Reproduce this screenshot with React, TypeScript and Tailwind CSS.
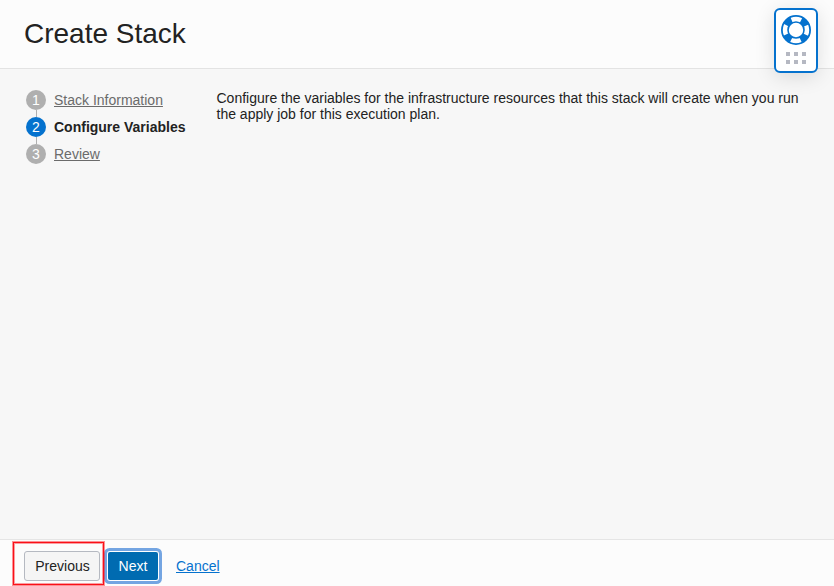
const steps = [
  { n: 1, label: 'Stack Information', active: false },
  { n: 2, label: 'Configure Variables', active: true },
  { n: 3, label: 'Review', active: false },
];

function LifeRing() {
  return (
    <svg width="32" height="32" viewBox="-16 -16 32 32" fill="none" stroke="#0572ce">
      <circle r="11.2" strokeWidth="6.4" strokeDasharray="7.6 9.993" strokeDashoffset="-4.997" />
      <circle r="14.1" strokeWidth="1.8" />
      <circle r="8" strokeWidth="1.6" />
    </svg>
  );
}

function HelpWidget() {
  return (
    <button className="absolute left-[774px] top-2 flex h-[65px] w-11 flex-col items-center rounded-md border-2 border-[#0572ce] bg-white pt-1 shadow-[0_4px_20px_rgba(0,0,0,0.12)]">
      <LifeRing />
      <span className="mt-1.5 grid grid-cols-3 gap-1">
        {[0, 1, 2, 3, 4, 5].map((i) => (
          <span key={i} className="size-1 bg-[#b5b8c2]" />
        ))}
      </span>
    </button>
  );
}

export default function App() {
  return (
    <div className="relative flex h-[586px] w-[834px] flex-col overflow-hidden bg-[#f7f7f7] font-['Liberation_Sans',Arial,sans-serif] text-sm text-[#222]">
      <header className="h-[69px] shrink-0 border-b border-[#e3e3e3] bg-[#fcfcfc] pl-6 pt-[17px]">
        <h1 className="text-[28px] leading-[34px]">Create Stack</h1>
      </header>
      <main className="flex flex-1 pt-[21px]">
        <ol className="flex w-[216.5px] shrink-0 flex-col gap-[7px] pl-[26px]">
          {steps.map((s) => (
            <li key={s.n} className="relative flex h-5 items-center gap-2">
              {s.n < 3 && <span className="absolute left-[10px] top-5 h-[7px] w-px bg-[#b0b0b0]" />}
              <span
                className={`flex size-5 items-center justify-center rounded-full text-white ${s.active ? 'bg-[#0572ce]' : 'bg-[#afafaf]'}`}
              >
                {s.n}
              </span>
              <span className={s.active ? 'font-bold' : 'text-[#6b6b6b] underline'}>{s.label}</span>
            </li>
          ))}
        </ol>
        <p className="w-[596px] leading-4">
          Configure the variables for the infrastructure resources that this stack will create when you run the apply
          job for this execution plan.
        </p>
      </main>
      <footer className="flex h-[47px] shrink-0 border-t border-[#e5e5e5] bg-[#fcfcfc] pl-[13px] pt-0.5">
        <div className="relative z-10 h-[43px] w-[91px] border border-[#fa1018] pl-2.5 pt-2 shadow-[inset_0_0_0_1px_rgba(250,16,24,0.4),0_0_0_1px_rgba(250,16,24,0.45)]">
          <button className="h-[30px] w-[76px] rounded-[3px] border border-[#b5b9c1] bg-[#f5f5f5] pl-px">Previous</button>
        </div>
        <button className="ml-1 mt-[10px] h-7 w-[50px] rounded-[2px] bg-[#006bb1] text-white shadow-[0_0_0_1px_#fff,0_0_0_4px_#74a5e2]">
          Next
        </button>
        <a className="ml-[18px] mt-[14px] leading-5 text-[#0572ce] underline">Cancel</a>
      </footer>
      <HelpWidget />
    </div>
  );
}
